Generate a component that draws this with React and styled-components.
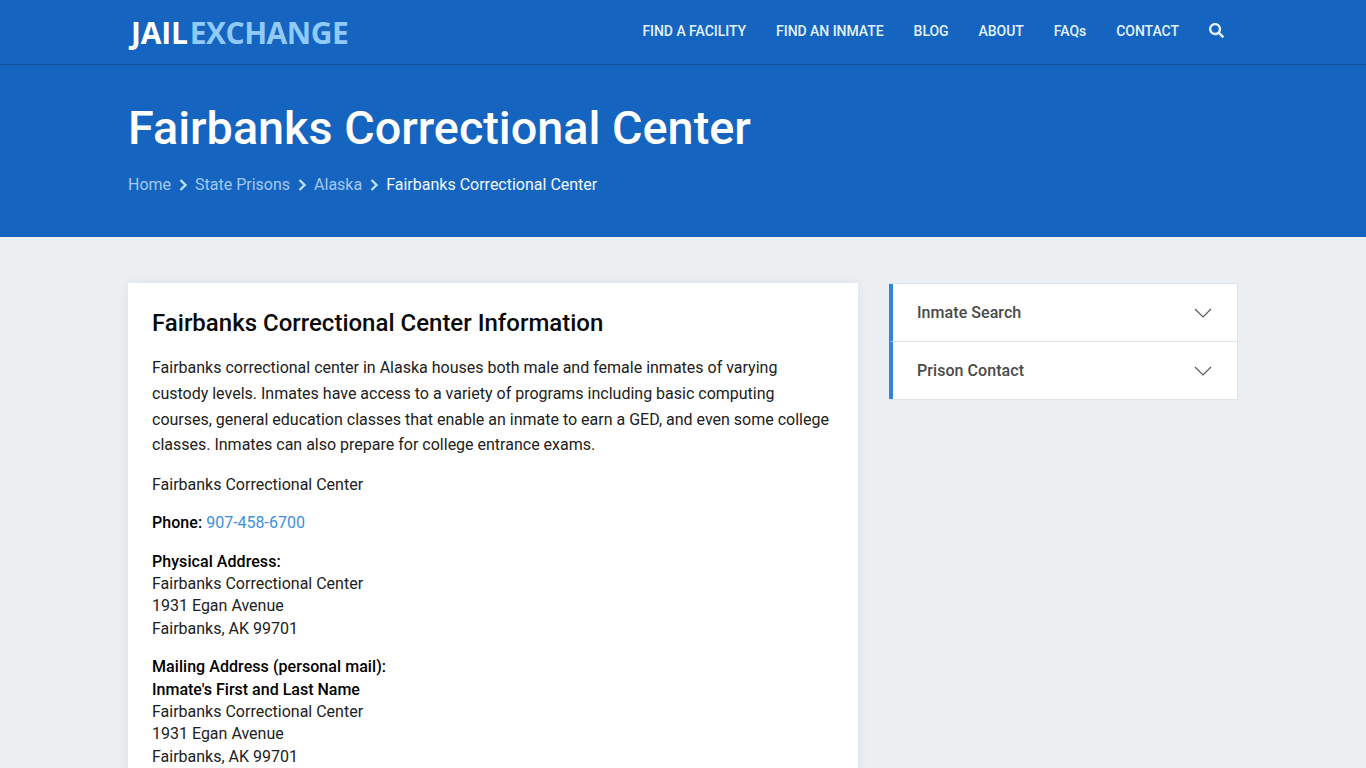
import styled, { createGlobalStyle } from 'styled-components';
import { FaSearch } from 'react-icons/fa';

const GlobalStyle = createGlobalStyle`
  html, body {
    margin: 0;
    height: 100%;
    overflow: hidden;
    background: #ebeff2;
    font-family: Roboto, "Liberation Sans", sans-serif;
  }
  * {
    box-sizing: border-box;
  }
`;

const Container = styled.div`
  width: 1110px;
  margin: 0 auto;
`;

const Header = styled.header`
  height: 65px;
  background: #1565c0;
  border-bottom: 1px solid #0f4f9c;
`;

const HeaderRow = styled(Container)`
  height: 64px;
  display: flex;
  align-items: center;
  justify-content: space-between;
`;

const Logo = styled.a`
  padding: 2px 0 0 3px;
  font-family: "Open Sans", sans-serif;
  font-size: 30px;
  font-weight: 700;
  letter-spacing: -0.2px;
  line-height: 62px;
  color: #fff;
`;

const LogoAccent = styled.span`
  margin-left: 2px;
  letter-spacing: -0.5px;
  color: #90caf9;
`;

const Nav = styled.nav`
  display: flex;
  align-items: center;
  gap: 30px;
  margin-right: 14px;
  padding-bottom: 3px;
`;

const NavLink = styled.a`
  font-size: 14px;
  font-weight: 500;
  letter-spacing: -0.04px;
  color: #e3f2fd;
`;

const SearchButton = styled.span`
  display: flex;
  color: #e3f2fd;
  font-size: 15px;
`;

const Hero = styled.section`
  height: 172px;
  background: #1565c0;
  padding-top: 33px;
`;

const Title = styled.h1`
  margin: 0;
  font-size: 46.75px;
  font-weight: 500;
  line-height: 60px;
  color: #fff;
`;

const Breadcrumbs = styled.div`
  display: flex;
  align-items: center;
  gap: 4px;
  margin-top: 15px;
  font-size: 16px;
  line-height: 24px;
`;

const Crumb = styled.a`
  color: ${(props) => (props.$current ? '#f0f7fe' : '#a3c9f1')};
`;

const CrumbArrow = styled.svg`
  width: 16px;
  height: 16px;
  fill: none;
  stroke: #bbdefb;
  stroke-width: 2.4;
`;

const Main = styled(Container)`
  display: flex;
  gap: 31px;
  padding-top: 46px;
`;

const Card = styled.article`
  width: 730px;
  flex-shrink: 0;
  padding: 25px 24px 24px;
  background: #fff;
  box-shadow: 0 0 12px rgba(0, 0, 0, 0.06);
  font-size: 16px;
  line-height: 22.4px;
  color: #212121;
`;

const CardTitle = styled.h2`
  margin: 0 0 17.4px;
  font-size: 24px;
  font-weight: 500;
  line-height: 30px;
  color: #0a0a0a;
`;

const Intro = styled.p`
  margin: 0 0 16px;
  line-height: 25.6px;
`;

const Block = styled.p`
  margin: 0 0 16px;
`;

const Label = styled.b`
  font-weight: 500;
  letter-spacing: ${(props) => (props.$plain ? '0' : '0.06px')};
  color: #000;
`;

const PhoneLink = styled.a`
  color: #3b8fe0;
`;

const Sidebar = styled.aside`
  width: 349px;
  align-self: flex-start;
  background: #fff;
  border: 1px solid #dfe3e8;
  border-left: 0;
`;

const AccordionRow = styled.div`
  height: ${(props) => (props.$last ? '57px' : '58px')};
  display: flex;
  align-items: center;
  justify-content: space-between;
  padding: 0 25px 0 24px;
  border-left: 4px solid #2f86d9;
  border-bottom: ${(props) => (props.$last ? '0' : '1px solid #dfe3e8')};
  font-size: 16px;
  font-weight: 500;
  letter-spacing: 0.06px;
  color: #4a4a4a;
`;

const AccordionArrow = styled.svg`
  width: 18px;
  height: 10px;
  fill: none;
  stroke: #555;
  stroke-width: 1.1;
`;

const navItems = ['FIND A FACILITY', 'FIND AN INMATE', 'BLOG', 'ABOUT', 'FAQs', 'CONTACT'];

const Arrow = () => (
  <CrumbArrow viewBox="0 0 16 16">
    <path d="M5.5 3 L10.5 8 L5.5 13" />
  </CrumbArrow>
);

const Down = () => (
  <AccordionArrow viewBox="0 0 18 10">
    <path d="M1 1 L9 9 L17 1" />
  </AccordionArrow>
);

export default function App() {
  return (
    <>
      <GlobalStyle />
      <Header>
        <HeaderRow>
          <Logo>
            JAIL<LogoAccent>EXCHANGE</LogoAccent>
          </Logo>
          <Nav>
            {navItems.map((item) => (
              <NavLink key={item}>{item}</NavLink>
            ))}
            <SearchButton>
              <FaSearch />
            </SearchButton>
          </Nav>
        </HeaderRow>
      </Header>
      <Hero>
        <Container>
          <Title>Fairbanks Correctional Center</Title>
          <Breadcrumbs>
            <Crumb>Home</Crumb>
            <Arrow />
            <Crumb>State Prisons</Crumb>
            <Arrow />
            <Crumb>Alaska</Crumb>
            <Arrow />
            <Crumb $current>Fairbanks Correctional Center</Crumb>
          </Breadcrumbs>
        </Container>
      </Hero>
      <Main>
        <Card>
          <CardTitle>Fairbanks Correctional Center Information</CardTitle>
          <Intro>
            Fairbanks correctional center in Alaska houses both male and female inmates of varying
            custody levels. Inmates have access to a variety of programs including basic computing
            courses, general education classes that enable an inmate to earn a GED, and even some
            college classes. Inmates can also prepare for college entrance exams.
          </Intro>
          <Block>Fairbanks Correctional Center</Block>
          <Block>
            <Label>Phone:</Label> <PhoneLink>907-458-6700</PhoneLink>
          </Block>
          <Block>
            <Label>Physical Address:</Label>
            <br />
            Fairbanks Correctional Center
            <br />
            1931 Egan Avenue
            <br />
            Fairbanks, AK 99701
          </Block>
          <Block>
            <Label>Mailing Address (personal mail):</Label>
            <br />
            <Label $plain>Inmate's First and Last Name</Label>
            <br />
            Fairbanks Correctional Center
            <br />
            1931 Egan Avenue
            <br />
            Fairbanks, AK 99701
          </Block>
        </Card>
        <Sidebar>
          <AccordionRow>
            Inmate Search
            <Down />
          </AccordionRow>
          <AccordionRow $last>
            Prison Contact
            <Down />
          </AccordionRow>
        </Sidebar>
      </Main>
    </>
  );
}
